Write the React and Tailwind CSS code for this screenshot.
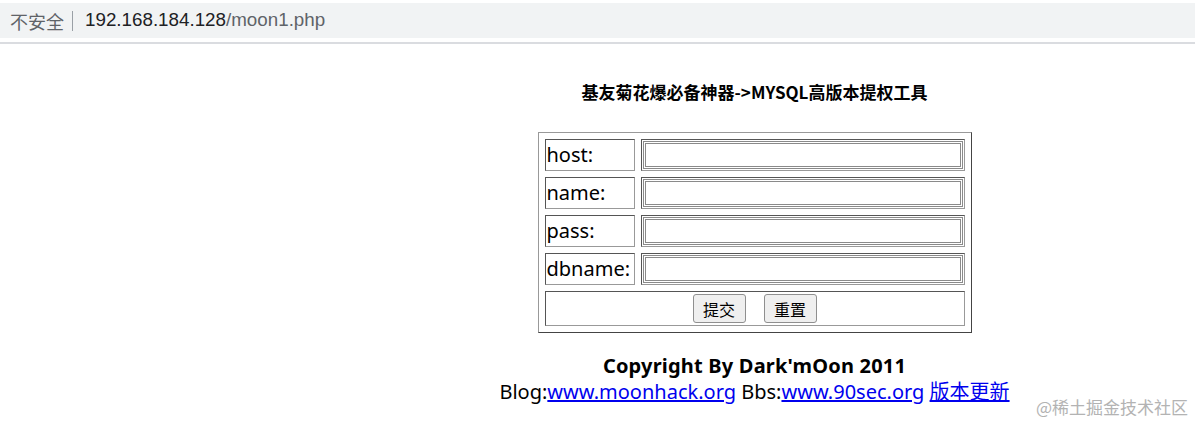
import React from "react";

const F = { fontFamily: '"Noto Sans", "Noto Sans CJK SC", sans-serif' };

function Row({ label }) {
  return (
    <tr>
      <td className="h-[32px] w-[90px] border border-t-[#555] border-l-[#555] border-b-[#999] border-r-[#999] p-[1px] text-[20px] leading-[28px] text-black whitespace-nowrap">
        {label}
      </td>
      <td className="h-[32px] w-[324px] border border-t-[#555] border-l-[#555] border-b-[#999] border-r-[#999] p-[1px]">
        <input
          type="text"
          className="block h-[28px] w-full border-[3px] border-double border-[#8a8a8a] bg-white outline-none"
        />
      </td>
    </tr>
  );
}

export default function App() {
  return (
    <div className="relative h-[421px] w-[1195px] overflow-hidden bg-white" style={F}>
      <div className="pt-[3px]">
        <div className="flex h-[35px] items-center bg-[#f1f3f4] pl-[10px] text-[18px] leading-none">
          <span className="text-[#5f6368]" style={{ fontFamily: '"Noto Sans CJK SC", sans-serif' }}>不安全</span>
          <span className="ml-[8px] mr-[12px] h-[20px] w-px bg-[#9aa0a6]" />
          <span className="text-[18.8px] text-[#202124]" style={{ fontFamily: '"Liberation Sans", Arial, sans-serif' }}>192.168.184.128</span>
          <span className="text-[18.8px] text-[#5f6368]" style={{ fontFamily: '"Liberation Sans", Arial, sans-serif' }}>/moon1.php</span>
        </div>
        <div className="mt-[4px] h-[2px] bg-[#dadce0]" />
      </div>

      <div className="flex flex-col items-center pl-[314px]">
        <div className="mt-[37px] text-[17px] font-bold leading-[22px] text-black" style={{ fontFamily: '"Noto Sans CJK SC", sans-serif' }}>
          基友菊花爆必备神器-&gt;MYSQL高版本提权工具
        </div>
        <table className="mt-[29px] border-separate border-spacing-[6px] border border-t-[#999] border-l-[#999] border-b-[#444] border-r-[#444]" style={F}>
          <tbody>
            <Row label="host:" />
            <Row label="name:" />
            <Row label="pass:" />
            <Row label="dbname:" />
            <tr>
              <td colSpan={2} className="h-[35px] border border-t-[#555] border-l-[#555] border-b-[#999] border-r-[#999] p-0">
                <div className="flex items-center justify-center gap-[18px]">
                  <button className="h-[29px] w-[53px] rounded-[3px] border border-[#8f8f8f] bg-[#efefef] text-[16px] text-black" style={{ fontFamily: '"Noto Sans CJK SC", sans-serif' }}>
                    提交
                  </button>
                  <button className="h-[29px] w-[53px] rounded-[3px] border border-[#8f8f8f] bg-[#efefef] text-[16px] text-black" style={{ fontFamily: '"Noto Sans CJK SC", sans-serif' }}>
                    重置
                  </button>
                </div>
              </td>
            </tr>
          </tbody>
        </table>
        <div className="mt-[20px] text-[20px] font-bold leading-[26px] tracking-[0.2px] text-black">
          Copyright By Dark'mOon 2011
        </div>
        <div className="whitespace-nowrap text-[20px] leading-[26px] text-black" style={{ fontFamily: '"Noto Sans", "Noto Sans CJK SC", sans-serif' }}>
          Blog:<a href="#" className="text-[#0000ee] underline">www.moonhack.org</a> Bbs:<a href="#" className="text-[#0000ee] underline">www.90sec.org</a> <a href="#" className="text-[#0000ee] underline">版本更新</a>
        </div>
      </div>

      <div className="absolute bottom-[6px] right-[7px] text-[17px] leading-none text-[#b3b3b3]" style={{ fontFamily: '"Noto Sans CJK SC", sans-serif' }}>
        @稀土掘金技术社区
      </div>
    </div>
  );
}
